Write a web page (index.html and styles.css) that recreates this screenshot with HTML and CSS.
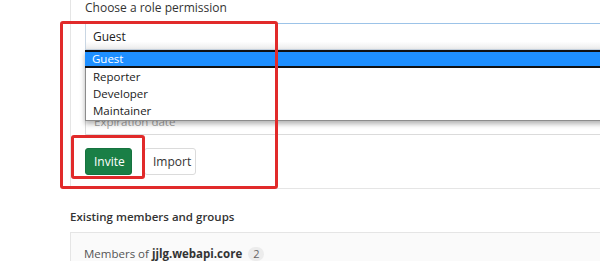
FILE: index.html
```html
<!DOCTYPE html>
<html lang="en">
<head>
  <meta charset="UTF-8" />
  <title>Invite members</title>
  <link rel="stylesheet" href="styles.css">
</head>
<body>
  <div class="page">
    <form class="invite-panel">
      <label class="field-label" for="role">Choose a role permission</label>
      <div class="select-wrap">
        <div class="select-box" id="role">Guest</div>
        <ul class="select-list">
          <li class="selected">Guest</li>
          <li>Reporter</li>
          <li>Developer</li>
          <li>Maintainer</li>
        </ul>
      </div>

      <input type="text" id="expires" class="date-input" placeholder="Expiration date" />

      <div class="button-group">
        <button type="submit" class="invite-btn">Invite</button>
        <button type="button" class="import-btn">Import</button>
      </div>
    </form>

    <h4 class="members-title">Existing members and groups</h4>
    <div class="members-box">
      Members of <strong>jjlg.webapi.core</strong> <span class="badge">2</span>
    </div>

    <div class="mark mark-form"></div>
    <div class="mark mark-invite"></div>
  </div>
</body>
</html>
```

FILE: styles.css
```css
body {
  margin: 0;
  padding: 0;
  background-color: white;
  font-family: 'Open Sans', 'Noto Sans', sans-serif;
  color: #2e2e2e;
  overflow: hidden;
}
.page {
  position: relative;
  display: flow-root;
  width: 720px;
  padding-left: 70px;
}
.invite-panel {
  padding: 0 0 13px 14px;
  border-left: 1px solid #e5e5e5;
  border-bottom: 1px solid #e5e5e5;
  background-color: white;
}
.field-label {
  display: block;
  font-size: 12px;
  line-height: 15px;
  color: #333;
}
.select-wrap {
  position: relative;
  margin-top: 8px;
}
.select-box {
  height: 25px;
  line-height: 26px;
  padding-left: 7px;
  font-size: 12px;
  color: #222;
  border: 1px solid #c9d6e3;
  border-top-color: #9cc3e8;
  background: linear-gradient(#fff 70%, #ececec);
}
.select-list {
  position: absolute;
  top: 27px;
  left: 0;
  right: 0;
  margin: 0;
  padding: 0 0 1px 0;
  list-style: none;
  background-color: white;
  border: 1px solid #8c8c8c;
  border-top: none;
  box-shadow: 0 3px 5px rgba(0, 0, 0, 0.3);
  z-index: 2;
}
.select-list li {
  height: 17px;
  line-height: 17px;
  padding-left: 7px;
  font-size: 11.5px;
  color: #1a1a1a;
}
.select-list li.selected {
  height: 14px;
  line-height: 14px;
  background-color: #1e8fff;
  color: white;
  border-top: 2px solid #111;
  border-bottom: 2px solid #111;
  margin-left: -1px;
}
.date-input {
  display: block;
  box-sizing: border-box;
  width: 100%;
  height: 27px;
  margin-top: 58px;
  padding: 0 8px;
  font-family: 'Open Sans', 'Noto Sans', sans-serif;
  font-size: 11.5px;
  border: 1px solid #dbdbdb;
}
.date-input::placeholder {
  color: #a0a0a0;
}
.button-group {
  display: flex;
  gap: 12px;
  margin-top: 13px;
}
.button-group button {
  font-family: 'Open Sans', 'Noto Sans', sans-serif;
  font-size: 12px;
  height: 27px;
  padding: 0 8px;
  border-radius: 3px;
  cursor: pointer;
}
.invite-btn {
  background-color: #1a7f46;
  border: 1px solid #16733f;
  color: white;
  width: 47px;
}
.import-btn {
  background-color: white;
  border: 1px solid #dbdbdb;
  color: #333;
  height: 28px;
  width: 52px;
}
.members-title {
  margin: 19px 0 0 0;
  font-size: 11.5px;
  font-weight: 600;
  line-height: 18px;
  color: #333;
}
.members-box {
  margin-top: 6px;
  padding: 12px 13px;
  font-size: 11.5px;
  line-height: 18px;
  color: #555;
  background-color: #fafafa;
  border: 1px solid #e5e5e5;
}
.members-box strong {
  color: #333;
}
.badge {
  display: inline-block;
  margin-left: 3px;
  padding: 0 5px;
  border-radius: 8px;
  background-color: #ececec;
  color: #666;
  font-size: 11px;
  line-height: 14px;
}
.mark {
  position: absolute;
  border: 3px solid #e12a2a;
  border-radius: 3px;
  z-index: 5;
}
.mark-form {
  left: 60px;
  top: 21px;
  width: 212px;
  height: 162px;
}
.mark-invite {
  left: 71px;
  top: 135px;
  width: 68px;
  height: 38px;
}
```
